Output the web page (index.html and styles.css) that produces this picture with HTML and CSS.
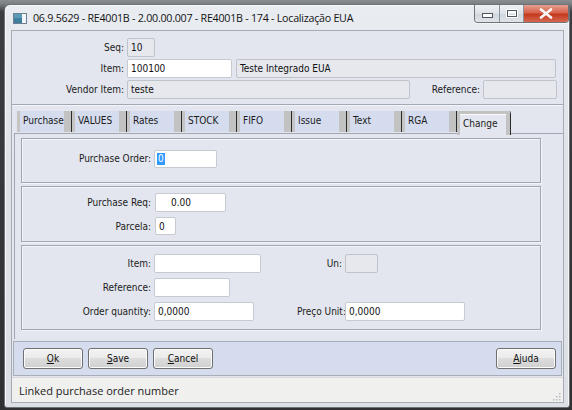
FILE: index.html
```html
<!DOCTYPE html>
<html>
<head>
<meta charset="utf-8">
<link rel="stylesheet" href="styles.css">
</head>
<body>
<div class="window">
  <div class="titlebar">
    <svg class="appicon" width="14" height="11" viewBox="0 0 14 11">
      <rect x="0.5" y="0.5" width="13" height="10" fill="#e9eef3" stroke="#6b7f90"/>
      <rect x="1" y="1" width="8" height="9" fill="#3f7f9e"/>
      <rect x="1" y="1" width="8" height="4" fill="#5a9bb8"/>
      <rect x="9" y="1" width="4" height="9" fill="#f4f6f8"/>
    </svg>
    <span class="title">06.9.5629 - RE4001B - 2.00.00.007 - RE4001B - 174 - Localização EUA</span>
    <div class="capbtns">
      <div class="cb cb-min"><span class="glyph-min"></span></div>
      <div class="cb cb-max"><span class="glyph-max"></span></div>
      <div class="cb cb-close">
        <svg width="14" height="11" viewBox="0 0 14 11"><path d="M2 1.5 L12 9.5 M12 1.5 L2 9.5" stroke="#fff" stroke-width="2.6" stroke-linecap="round"/><path d="M2 1.5 L12 9.5 M12 1.5 L2 9.5" stroke="#f3f3f3" stroke-width="1.4" stroke-linecap="round"/></svg>
      </div>
    </div>
  </div>

  <div class="client">
    <div class="head">
      <div class="hrow">
        <label class="hlabel">Seq:</label>
        <div class="field dis w-seq">10</div>
      </div>
      <div class="hrow">
        <label class="hlabel">Item:</label>
        <div class="field w-item">100100</div>
        <div class="field dis w-desc">Teste Integrado EUA</div>
      </div>
      <div class="hrow">
        <label class="hlabel">Vendor Item:</label>
        <div class="field dis w-vendor">teste</div>
        <label class="reflabel">Reference:</label>
        <div class="field dis w-ref"></div>
      </div>
    </div>

    <div class="tabarea">
      <div class="tabstrip">
        <div class="tab">Purchase</div>
        <div class="tab">VALUES</div>
        <div class="tab">Rates</div>
        <div class="tab">STOCK</div>
        <div class="tab">FIFO</div>
        <div class="tab">Issue</div>
        <div class="tab">Text</div>
        <div class="tab">RGA</div>
        <div class="tab active">Change</div>
      </div>
      <div class="pane">
        <div class="group g1">
          <label class="glabel">Purchase Order:</label>
          <div class="field w-po"><span class="sel">0</span></div>
        </div>
        <div class="group g2">
          <div class="grow">
            <label class="glabel">Purchase Req:</label>
            <div class="field w-req">0.00</div>
          </div>
          <div class="grow">
            <label class="glabel">Parcela:</label>
            <div class="field w-parc">0</div>
          </div>
        </div>
        <div class="group g3">
          <label class="glabel">Item:</label>
          <div class="field w-gitem"></div>
          <label class="glabel">Un:</label>
          <div class="field dis w-un"></div>

          <label class="glabel">Reference:</label>
          <div class="field w-gref"></div>
          <span></span>
          <span></span>

          <label class="glabel">Order quantity:</label>
          <div class="field w-qty">0,0000</div>
          <label class="glabel">Preço Unit:</label>
          <div class="field w-price">0,0000</div>
        </div>
      </div>
    </div>

    <div class="buttonbar">
      <button class="btn"><u>O</u>k</button>
      <button class="btn"><u>S</u>ave</button>
      <button class="btn"><u>C</u>ancel</button>
      <span class="spacer"></span>
      <button class="btn"><u>A</u>juda</button>
    </div>

    <div class="statusbar">
      <span>Linked purchase order number</span>
      <svg class="grip" width="10" height="10" viewBox="0 0 10 10">
        <g fill="#b9bcc0">
          <rect x="8" y="2" width="1.5" height="1.5"/>
          <rect x="5" y="5" width="1.5" height="1.5"/><rect x="8" y="5" width="1.5" height="1.5"/>
          <rect x="2" y="8" width="1.5" height="1.5"/><rect x="5" y="8" width="1.5" height="1.5"/><rect x="8" y="8" width="1.5" height="1.5"/>
        </g>
      </svg>
    </div>
  </div>
</div>
</body>
</html>
```

FILE: styles.css
```css
html, body {
  margin: 0;
  padding: 0;
}
body {
  width: 572px;
  height: 410px;
  overflow: hidden;
  background: linear-gradient(180deg, #8a8d90 0px, #7c7f82 4px, #3b3d40 12px, #2f3133 100%);
  font-family: "DejaVu Sans Condensed", "Liberation Sans", sans-serif;
  font-size: 10px;
  color: #1b1b1b;
}
.window {
  box-sizing: border-box;
  margin: 4px 2px 0 4px;
  width: 566px;
  height: 404px;
  border: 1px solid #6d7278;
  border-radius: 6px 6px 3px 3px;
  background: linear-gradient(180deg, #e9ecf0 0%, #dfe3e8 40%, #dde1e6 100%);
  box-shadow: inset 1px 1px 0 #f7f8fa, inset -1px 0 0 #f4f5f7;
  display: flex;
  flex-direction: column;
  padding: 0 5px 4px 6px;
}
.titlebar {
  height: 25px;
  display: flex;
  align-items: flex-start;
}
.appicon {
  margin: 8px 6px 0 2px;
  flex: none;
}
.title {
  font-family: "Open Sans", "Liberation Sans", sans-serif;
  font-size: 10.7px;
  color: #141414;
  margin-top: 6px;
  letter-spacing: -0.25px;
  white-space: nowrap;
}
.capbtns {
  margin-left: auto;
  margin-right: -5px;
  display: flex;
  height: 17px;
  border: 1px solid #6f747b;
  border-top: none;
  border-radius: 0 0 4px 4px;
  overflow: hidden;
  box-shadow: 0 1px 0 #f4f6f8;
}
.cb {
  height: 17px;
  display: flex;
  align-items: center;
  justify-content: center;
}
.cb-min, .cb-max {
  width: 24px;
  background: linear-gradient(180deg, #eef1f4 0%, #dde2e8 50%, #ced5dc 51%, #dfe4ea 100%);
  border-right: 1px solid #8d939a;
}
.cb-max { width: 23px; }
.cb-close {
  width: 44px;
  background: linear-gradient(180deg, #e7a090 0%, #d7624e 45%, #c3391f 55%, #d5684e 100%);
}
.glyph-min {
  width: 9px;
  height: 3px;
  background: #fff;
  border: 1px solid #4e5560;
  margin-top: 4px;
}
.glyph-max {
  width: 8px;
  height: 5px;
  border: 1px solid #4e5560;
  box-shadow: inset 0 2px 0 #fff, inset 0 -1px 0 #fff, inset 1px 0 0 #fff, inset -1px 0 0 #fff, 0 0 0 1px #fff;
  background: #dde2e8;
}

.client {
  flex: 1;
  display: flex;
  flex-direction: column;
  background: #e3e6ee;
  border: 1px solid #a6acb5;
}

/* header panel */
.head {
  border-bottom: 1px solid #a3a9b2;
  padding: 7px 6px 5px 0;
  display: flex;
  flex-direction: column;
  gap: 2px;
  box-shadow: 0 1px 0 #f4f5f8;
}
.hrow {
  display: flex;
  align-items: center;
  height: 19px;
}
.hlabel {
  width: 112px;
  text-align: right;
  margin-right: 3px;
  flex: none;
}
.field {
  box-sizing: border-box;
  height: 19px;
  background: #ffffff;
  border: 1px solid #c7cbd1;
  border-radius: 2px;
  padding: 0 3px;
  display: flex;
  align-items: center;
  font-size: 10px;
  color: #111;
  white-space: nowrap;
  flex: none;
}
.field.dis {
  background: #e6e8ee;
  border-color: #bfc4ca;
}
.w-seq { width: 28px; }
.w-item { width: 105px; }
.w-desc { width: 320px; margin-left: 4px; }
.w-vendor { width: 283px; }
.reflabel {
  flex: 1;
  text-align: right;
  margin-right: 3px;
}
.w-ref { width: 74px; }

/* tabs */
.tabarea {
  flex: 1;
  display: flex;
  flex-direction: column;
  padding: 6px 0 0 2px;
}
.tabstrip {
  display: flex;
  padding-left: 3px;
  height: 22px;
  align-items: flex-end;
}
.tab {
  box-sizing: border-box;
  width: 55px;
  height: 21px;
  background: #d4dcee;
  border-left: 3px solid #c4c4c4;
  border-right: 1px solid #2b2b2b;
  box-shadow: inset -7px 0 0 #c2c2c2;
  padding: 4px 0 0 3px;
  color: #1b1b1b;
  white-space: nowrap;
  margin-bottom: 1px;
}
.tab.active {
  width: 54px;
  height: 24px;
  margin-bottom: -2px;
  background: #e3e6ee;
  border: 3px solid #c2c2c2;
  border-bottom: none;
  border-right: 1px solid #2b2b2b;
  box-shadow: inset -4px 0 0 #c2c2c2, inset 0 1px 0 #fbfbfb;
  padding: 4px 0 0 3px;
  position: relative;
  z-index: 1;
}
.pane {
  flex: 1;
  border-top: 1px solid #a0a7b1;
  border-left: 1px solid #a0a7b1;
  padding: 4px 0 0 6px;
  display: flex;
  flex-direction: column;
  gap: 3px;
}
.group {
  box-sizing: border-box;
  width: 520px;
  border: 1px solid #a0a7b1;
  box-shadow: inset 1px 1px 0 #f3f4f7, 1px 1px 0 #f3f4f7;
}
.glabel {
  text-align: right;
  white-space: nowrap;
}
.g1 {
  height: 45px;
  display: flex;
  align-items: flex-start;
  padding-top: 11px;
}
.g1 .glabel {
  width: 129px;
  margin-right: 3px;
  padding-top: 3px;
}
.w-po { width: 63px; height: 18px; padding-left: 2px; }
.sel {
  background: #3399ff;
  color: #fff;
  padding: 0 1px;
  line-height: 12px;
}
.g2 {
  height: 56px;
  padding-top: 6px;
  display: flex;
  flex-direction: column;
  gap: 5px;
}
.grow {
  display: flex;
  align-items: center;
}
.g2 .glabel {
  width: 129px;
  margin-right: 4px;
}
.w-req { width: 71px; padding-left: 15px; }
.w-parc { width: 21px; height: 18px; }
.g3 {
  height: 85px;
  padding-top: 8px;
  display: grid;
  grid-template-columns: 129px 140px 45px auto;
  grid-auto-rows: 19px;
  column-gap: 3px;
  row-gap: 5px;
  align-items: center;
}
.w-gitem { width: 107px; }
.w-un { width: 33px; }
.w-gref { width: 76px; }
.w-qty { width: 100px; }
.w-price { width: 120px; }

/* button bar */
.buttonbar {
  height: 35px;
  box-sizing: border-box;
  margin: 2px 1px 0 1px;
  background: #d4dcee;
  border: 1px solid #a7aeb8;
  display: flex;
  align-items: center;
  padding: 0 5px 0 9px;
  gap: 5px;
}
.spacer { flex: 1; }
.btn {
  box-sizing: border-box;
  width: 60px;
  height: 21px;
  border: 1px solid #707070;
  border-radius: 3px;
  background: linear-gradient(180deg, #f3f3f3 0%, #ebebeb 45%, #dddddd 50%, #cfcfcf 100%);
  box-shadow: inset 0 0 0 1px #fbfbfb;
  font-family: "DejaVu Sans Condensed", "Liberation Sans", sans-serif;
  font-size: 10px;
  color: #111;
  padding: 0;
}
.btn u { text-decoration: underline; }

/* status bar */
.statusbar {
  height: 24px;
  margin-top: 1px;
  background: #f0f0ef;
  border-top: 1px solid #d8d9db;
  display: flex;
  align-items: center;
  justify-content: space-between;
  padding: 0 2px 0 7px;
  font-family: "Open Sans", "Liberation Sans", sans-serif;
  font-size: 11px;
  color: #1b1b1b;
}
.grip {
  align-self: flex-end;
  margin-bottom: 1px;
}
```
